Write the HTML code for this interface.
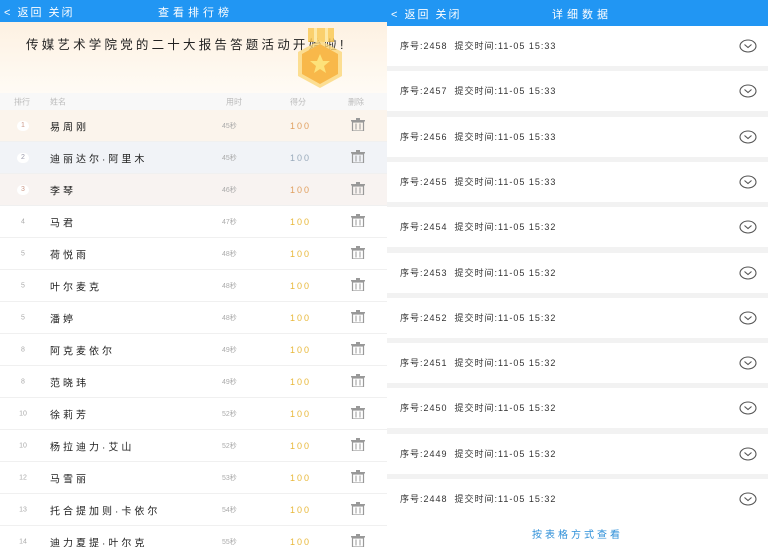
<!DOCTYPE html>
<html><head><meta charset="utf-8"><style>
*{margin:0;padding:0;box-sizing:border-box}
body{width:768px;height:547px;overflow:hidden;background:#fff;position:relative;font-family:"Liberation Sans","Noto Sans CJK SC",sans-serif}
.hd{position:absolute;top:0;background:#2196f3;color:#fff;font-size:11px}
.hd .b{position:absolute;left:4px;top:4px;letter-spacing:2px}
.hd .t{position:absolute;top:4px;letter-spacing:4px}
.left{position:absolute;left:0;top:0;width:387px;height:547px;background:#fff;overflow:hidden}
.banner{position:absolute;top:22px;left:0;width:387px;height:71px;background:linear-gradient(180deg,#fdf1e2,#fffbf5)}
.banner .tx{position:absolute;left:26px;top:12px;font-size:12.5px;color:#222;letter-spacing:3.2px}
.th{position:absolute;top:93px;left:0;width:387px;height:17px;background:#f8f8f8;font-size:8px;color:#bbb}
.row{position:absolute;left:0;width:387px;height:32px;border-bottom:1px solid #f0f0f0;font-size:10px}
.c{position:absolute;top:50%;transform:translateY(-50%)}
.rk{left:17px;width:12px;text-align:center;font-size:7px;color:#aaa}
.rk.h{background:#fff;border-radius:6px;height:10px;line-height:10px}
.nm{left:50px;color:#222;letter-spacing:3px}
.tm{left:222px;font-size:7px;color:#aaa}
.sc{left:290px;font-size:9px;color:#e8b83a;letter-spacing:2px}
.del{left:351px}
.right{position:absolute;left:387px;top:0;width:381px;height:547px;background:#f2f2f2}
.card{position:absolute;left:0;width:381px;height:40px;background:#fff;font-size:9px;color:#333}
.card .tx{position:absolute;left:13px;top:13px;letter-spacing:1px}
.card svg{position:absolute;left:352px;top:13px}
</style></head><body>
<div class="left">
<div class="hd" style="left:0;width:387px;height:22px"><span class="b">&lt; 返回 关闭</span><span class="t" style="left:158px">查看排行榜</span></div>
<div class="banner"><div class="tx">传媒艺术学院党的二十大报告答题活动开始啦!</div>
<svg style="position:absolute;left:290px;top:4px" width="60" height="65" viewBox="0 0 60 65"><rect x="18" y="2" width="26" height="14" fill="#f9c74f" opacity=".8"/><rect x="24" y="2" width="3" height="14" fill="#fde9a8"/><rect x="35" y="2" width="3" height="14" fill="#fde9a8"/><polygon points="30,14 52,26 52,50 30,62 8,50 8,26" fill="#fbd77a" opacity=".8"/><polygon points="30,18 48,28 48,48 30,58 12,48 12,28" fill="#f8b84a"/><polygon points="30,28 33,35 40,35 34,40 36,47 30,43 24,47 26,40 20,35 27,35" fill="#fde27a"/></svg></div>
<div class="th"><span class="c" style="left:14px">排行</span><span class="c" style="left:50px">姓名</span><span class="c" style="left:226px">用时</span><span class="c" style="left:290px">得分</span><span class="c" style="left:348px">删除</span></div>
<div id="rows"></div>
</div>
<div class="right">
<div class="hd" style="left:0;width:381px;height:26px"><span class="b" style="top:6px">&lt; 返回 关闭</span><span class="t" style="left:165px;top:6px">详细数据</span></div>
<div id="cards"></div>
<div style="position:absolute;left:0;top:519px;width:381px;height:28px;background:#fff;text-align:center;font-size:10px;color:#2d8fd8;line-height:34px;letter-spacing:3px">按表格方式查看</div>
</div>
<script>
var names=["易周刚","迪丽达尔·阿里木","李琴","马君","荷悦雨","叶尔麦克","潘婷","阿克麦依尔","范晓玮","徐莉芳","杨拉迪力·艾山","马雪丽","托合提加则·卡依尔","迪力夏提·叶尔克"];
var rk=["1","2","3","4","5","5","5","8","8","10","10","12","13","14"];
var tm=["45秒","45秒","46秒","47秒","48秒","48秒","48秒","49秒","49秒","52秒","52秒","53秒","54秒","55秒"];
var bg=["#fbf4ec","#f1f3f7","#f8f3f1"];
var del='<svg width="14" height="13" viewBox="0 0 14 13"><rect x="0" y="2" width="14" height="1.5" fill="#999"/><rect x="5" y="0" width="4" height="2" fill="#999"/><rect x="1.5" y="4" width="11" height="9" fill="none" stroke="#999" stroke-width="1.2"/><rect x="4.5" y="5.5" width="1" height="6" fill="#999"/><rect x="8.5" y="5.5" width="1" height="6" fill="#999"/></svg>';
var h="";
for(var i=0;i<14;i++){var y=110+i*32;
h+='<div class="row" style="top:'+y+'px;background:'+(bg[i]||'#fff')+'"><span class="c rk'+(i<3?' h':'')+'" style="'+(i<3?'color:'+(i==1?'#99a':'#c98')+'':'')+'">'+rk[i]+'</span><span class="c nm">'+names[i]+'</span><span class="c tm">'+tm[i]+'</span><span class="c sc" style="'+(i<3?'color:'+(i==1?'#9ab':'#e0a060'):'')+'">100</span><span class="c del">'+del+'</span></div>';}
document.getElementById('rows').innerHTML=h;
var c="";
var t=["15:33","15:33","15:33","15:33","15:32","15:32","15:32","15:32","15:32","15:32","15:32"];
for(var j=0;j<11;j++){var y=26+j*45.3;
c+='<div class="card" style="top:'+y+'px"><span class="tx">序号:'+(2458-j)+'&nbsp;&nbsp;提交时间:11-05 '+t[j]+'</span><svg width="18" height="14" viewBox="0 0 18 14"><ellipse cx="9" cy="7" rx="8" ry="6" fill="none" stroke="#555" stroke-width="1.1"/><path d="M5.5 5.5 L9 8.5 L12.5 5.5" fill="none" stroke="#555" stroke-width="1.1"/></svg></div>';}
document.getElementById('cards').innerHTML=c;
</script>
</body></html>
